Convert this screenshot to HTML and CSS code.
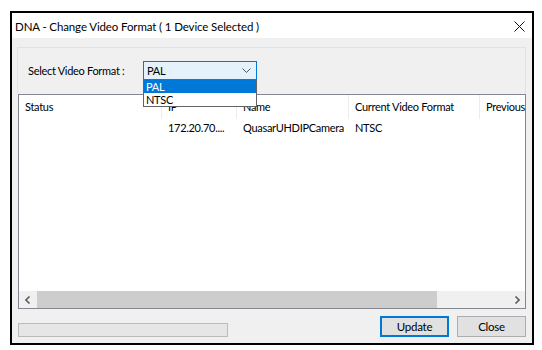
FILE: index.html
```html
<!DOCTYPE html>
<html>
<head>
<meta charset="utf-8">
<link rel="stylesheet" href="styles.css">
</head>
<body>
<div class="window">
  <div class="titlebar">
    <span class="title">DNA - Change Video Format ( 1 Device Selected )</span>
    <svg class="close-x" width="11" height="11" viewBox="0 0 11 11"><path d="M0.5 0.5 L10.5 10.5 M10.5 0.5 L0.5 10.5" stroke="#111" stroke-width="1"/></svg>
  </div>
  <div class="client">
    <div class="panel">
      <span class="label">Select Video Format :</span>
      <div class="combo-wrap">
        <div class="combo">
          <span>PAL</span>
          <svg class="chev" width="9" height="5" viewBox="0 0 9 5"><path d="M0.5 0.5 L4.5 4.5 L8.5 0.5" fill="none" stroke="#555" stroke-width="1"/></svg>
        </div>
        <div class="dropdown">
          <div class="opt sel">PAL</div>
          <div class="opt">NTSC</div>
        </div>
      </div>
    </div>
    <div class="listview">
      <div class="lv-body">
        <div class="lv-row lv-head">
          <div class="c c1">Status</div>
          <div class="c c2">IP</div>
          <div class="c c3">Name</div>
          <div class="c c4">Current Video Format</div>
          <div class="c c5">Previous</div>
        </div>
        <div class="lv-row lv-data">
          <div class="c c1"></div>
          <div class="c c2">172.20.70....</div>
          <div class="c c3">QuasarUHDIPCamera</div>
          <div class="c c4">NTSC</div>
          <div class="c c5"></div>
        </div>
      </div>
      <div class="hscroll">
        <div class="arrow">
          <svg width="6" height="8" viewBox="0 0 6 8"><path d="M4.5 0.5 L1 4 L4.5 7.5" fill="none" stroke="#606060" stroke-width="1.6"/></svg>
        </div>
        <div class="track"><div class="thumb"></div></div>
        <div class="arrow">
          <svg width="6" height="8" viewBox="0 0 6 8"><path d="M1.5 0.5 L5 4 L1.5 7.5" fill="none" stroke="#606060" stroke-width="1.6"/></svg>
        </div>
      </div>
    </div>
    <div class="footer">
      <div class="progress"></div>
      <div class="spacer"></div>
      <button class="btn btn-default">Update</button>
      <button class="btn">Close</button>
    </div>
  </div>
</div>
</body>
</html>
```
FILE: styles.css
```css
* { box-sizing: border-box; }
html, body { margin: 0; padding: 0; background: #fff; }
body {
  font-family: Lato, "Noto Sans", sans-serif;
  font-size: 11px;
  letter-spacing: -0.3px;
  color: #000;
}
.window {
  margin: 11px 0 0 10px;
  width: 524px;
  height: 334px;
  border: 2px solid #000;
  display: flex;
  flex-direction: column;
  background: #f0f0f0;
}
.titlebar {
  height: 25px;
  background: #fff;
  display: flex;
  align-items: center;
  padding: 1px 6px 0 3px;
  flex: none;
}
.title { flex: 1; font-size: 11.5px; letter-spacing: -0.12px; }
.close-x { margin-right: 1px; }
.client {
  flex: 1;
  display: flex;
  flex-direction: column;
  padding: 9px 6px 0 5px;
}
.panel {
  height: 47px;
  border: 1px solid #e2e2e2;
  border-bottom: none;
  display: flex;
  align-items: center;
  padding: 0 0 2px 10px;
  background: #f0f0f0;
  position: relative;
  z-index: 2;
}
.label { width: 115px; }
.combo-wrap { position: relative; width: 114px; height: 19px; }
.combo {
  height: 19px;
  border: 1px solid #0078d7;
  background: #e5f1fb;
  display: flex;
  align-items: center;
  justify-content: space-between;
  padding: 0 5px 0 3px;
}
.chev { margin-top: 1px; }
.dropdown {
  position: absolute;
  left: 0;
  top: 18px;
  width: 114px;
  border: 1px solid #646464;
  background: #fff;
}
.opt { height: 13px; line-height: 13px; padding-left: 2px; }
.opt.sel { background: #0078d7; color: #fff; }
.listview {
  margin-left: 1px;
  height: 215px;
  border: 1px solid #828790;
  background: #fff;
  display: flex;
  flex-direction: column;
  flex: none;
}
.lv-body { flex: 1; overflow: hidden; }
.lv-row { display: flex; white-space: nowrap; }
.lv-head { height: 24px; align-items: center; }
.lv-head .c { border-right: 1px solid #ececec; height: 24px; line-height: 24px; }
.lv-data { height: 17px; align-items: center; }
.c { padding-left: 6px; flex: none; overflow: hidden; }
.c1 { width: 143px; }
.c2 { width: 75px; }
.c3 { width: 112px; }
.c4 { width: 131px; }
.c5 { width: 80px; }
.hscroll {
  height: 17px;
  display: flex;
  background: #f0f0f0;
  flex: none;
}
.arrow { width: 17px; display: flex; align-items: center; justify-content: center; }
.track { flex: 1; display: flex; }
.thumb { width: 400px; margin: 0 0 0 1px; background: #cdcdcd; }
.footer {
  display: flex;
  align-items: center;
  padding: 7px 0 0 1px;
}
.progress {
  width: 210px;
  height: 14px;
  border: 1px solid #bcbcbc;
  background: #e6e6e6;
  margin-top: 6px;
}
.spacer { flex: 1; }
.btn {
  font-family: inherit;
  font-size: 11.5px;
  letter-spacing: -0.25px;
  width: 69px;
  height: 21px;
  border: 1px solid #adadad;
  background: #e1e1e1;
  padding: 0;
  margin-left: 8px;
  color: #000;
}
.btn-default { border: 2px solid #0078d7; margin-left: 0; }
```
